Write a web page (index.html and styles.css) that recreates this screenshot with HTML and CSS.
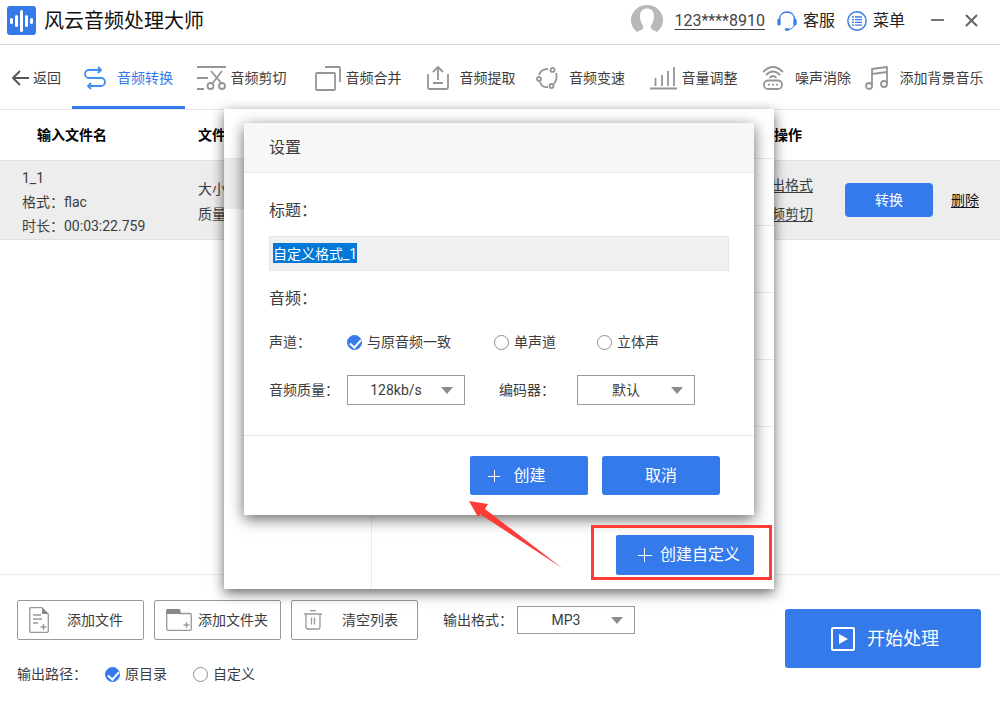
FILE: index.html
```html
<!DOCTYPE html>
<html lang="zh-CN">
<head>
<meta charset="utf-8">
<meta name="viewport" content="width=device-width, initial-scale=1">
<title>风云音频处理大师</title>
<link rel="stylesheet" href="styles.css">
</head>
<body>
<div class="app">
  <header class="titlebar">
    <svg class="logo" width="29" height="29" viewBox="0 0 29 29"><rect width="29" height="29" rx="3" fill="#347aea"/><g stroke="#fff" stroke-width="3" stroke-linecap="round"><path d="M4.500 13.500v3M9.500 10.500v9M14.500 5.500v19M19.500 10.500v9M24.500 13.500v3"/></g></svg>
    <h1 class="app-name">风云音频处理大师</h1>
    <div class="account">
      <svg width="32" height="32" viewBox="0 0 32 32"><path fill="#b9b9b9" d="M4 25A16 15 0 1 1 28 25L26 27L20 24V20.500C22 18 23 15 23 11C23 6 20 3.500 16 3.500S9 6 9 11C9 15 10 18 12 20.500V24L6 27Z"/></svg>
      <a class="phone" href="#">123****8910</a>
    </div>
    <button class="title-action" type="button">
      <svg width="20" height="20" viewBox="0 0 20 20" fill="none" stroke="#347aea"><path d="M2.500 9C2.500 4 5.500 1 10 1S17.500 4 17.500 9" stroke-width="1.300"/><path d="M2 9v4M18 9v4" stroke-width="3.200" stroke-linecap="round"/><path d="M17.500 13C17 16 15 18 11.500 18.500" stroke-width="1"/><path d="M9 18.500h2" stroke-width="2.500" stroke-linecap="round"/></svg>
      <span>客服</span>
    </button>
    <button class="title-action menu" type="button">
      <svg width="20" height="20" viewBox="0 0 20 20" fill="none" stroke="#347aea"><circle cx="10" cy="10" r="9.200" stroke-width="1.400"/><path d="M5 6h2M5 8.700h2M5 11.400h2M5 14.100h2M8 6h7M8 8.700h7M8 11.400h7M8 14.100h7" stroke-width="1.300"/></svg>
      <span>菜单</span>
    </button>
    <button class="window-button" type="button" aria-label="最小化"><svg width="13" height="13" viewBox="0 0 13 13"><path d="M0 6h13" stroke="#777" stroke-width="2"/></svg></button>
    <button class="window-button" type="button" aria-label="关闭"><svg width="13" height="13" viewBox="0 0 13 13"><path d="M1 1l11 11M12 1L1 12" stroke="#666" stroke-width="2"/></svg></button>
  </header>

  <nav class="toolbar">
    <button class="back" type="button">
      <svg class="line" width="17" height="16" viewBox="0 0 17 16"><path d="M17 8H1M8 1L1 8l7 7" stroke="#555"/></svg>
      <span>返回</span>
    </button>
    <button class="tab wide active" type="button">
      <svg class="line" width="22" height="24" viewBox="0 0 22 24"><path d="M14 1l3 3-3 3M17 4H5A4 4 0 0 0 5 12H17A4 4 0 0 1 17 20H4M7 17L4 20l3 3" stroke="#3f8ff0"/></svg>
      <span>音频转换</span>
    </button>
    <button class="tab" type="button">
      <svg class="line" width="29" height="24" viewBox="0 0 29 24"><path d="M0 1h29M0 12h11M0 23h7M14 5l11 13M25 5L15 18"/><circle cx="13.500" cy="20" r="3"/><circle cx="25" cy="20" r="3"/></svg>
      <span>音频剪切</span>
    </button>
    <button class="tab inset" type="button">
      <svg class="line" width="26" height="25" viewBox="0 0 26 25"><rect x="1" y="7" width="19" height="17" rx="1"/><path d="M10 1h14q1 0 1 1v14"/></svg>
      <span>音频合并</span>
    </button>
    <button class="tab wide inset" type="button">
      <svg class="line" width="22" height="24" viewBox="0 0 22 24"><path d="M1 8v13q0 2 2 2h16q2 0 2-2V8M11 14V1M6 6l5-5 5 5M6 17h10"/></svg>
      <span>音频提取</span>
    </button>
    <button class="tab wide" type="button">
      <svg class="line" width="22" height="22" viewBox="0 0 22 22"><path d="M3 8Q5 2 12 2M20 6Q22 11 18 17M12 20Q6 21 4 15"/><circle cx="16.500" cy="2.900" r="2"/><circle cx="3" cy="12" r="2"/><circle cx="15.500" cy="19" r="2"/></svg>
      <span>音频变速</span>
    </button>
    <button class="tab" type="button">
      <svg class="line" width="27" height="24" viewBox="0 0 27 24"><path d="M0 22.500h27M5.500 12v8M12 9v11M18 5v15M24 1v19"/></svg>
      <span>音量调整</span>
    </button>
    <button class="tab wide" type="button">
      <svg class="line" width="22" height="24" viewBox="0 0 22 24"><rect x="2" y="14.500" width="18" height="8.500" rx="4"/><path d="M1 6Q11-4 21 6M4 9Q11 2 18 9M7.500 12Q11 8 14.500 12M6 18.700h2M10 18.700h2M14 18.700h2"/></svg>
      <span>噪声消除</span>
    </button>
    <button class="tab wide" type="button">
      <svg class="line" width="24" height="24" viewBox="0 0 24 24"><path d="M7 20V3L22 1v17M7 8l15-2"/><circle cx="4" cy="20" r="3"/><circle cx="19" cy="18" r="3"/></svg>
      <span>添加背景音乐</span>
    </button>
  </nav>

  <main class="files">
    <table class="file-table">
      <colgroup><col class="col-name"><col><col class="col-links"><col class="col-actions"></colgroup>
      <thead>
        <tr><th class="name">输入文件名</th><th>文件信息</th><th class="ops" colspan="2">操作</th></tr>
      </thead>
      <tbody>
        <tr>
          <td class="name"><div>1_1</div><div>格式：flac</div><div>时长：00:03:22.759</div></td>
          <td class="info"><div>大小：</div><div>质量：</div></td>
          <td class="links"><a href="#">输出格式</a><a href="#">音频剪切</a></td>
          <td><div class="row-actions"><button class="primary convert" type="button">转换</button><a class="delete" href="#">删除</a></div></td>
        </tr>
      </tbody>
    </table>
  </main>

  <footer class="footer">
    <div class="options">
      <div class="option-row">
        <button class="file-button add-file" type="button">
          <svg class="thin" width="20" height="26" viewBox="0 0 20 26"><path d="M13 .7H2Q.7.700.7 2v22q0 1.300 1.300 1.300h16q1.300 0 1.300-1.300V7M4 8h8M4 12h9M4 16h5M14.500 17v6M11.500 20h6"/><path d="M13 0l7 7h-7z" fill="#888" stroke="none"/></svg>
          <span>添加文件</span>
        </button>
        <button class="file-button add-folder" type="button">
          <svg class="thin" width="26" height="22" viewBox="0 0 26 22"><path d="M.7 4v16q0 1.300 1.300 1.300h22q1.300 0 1.300-1.300V6Q25.300 4.500 24 4.500H13M20.500 13v6M17.500 16h6"/><path d="M0 5V1.500Q0 0 1.500 0H13q1.500 0 1.500 1.500V5z" fill="#888" stroke="none"/></svg>
          <span>添加文件夹</span>
        </button>
        <button class="file-button clear" type="button">
          <svg class="thin" width="18" height="20" viewBox="0 0 18 20"><path d="M0 4h18M6 .7h6M2 4v13q0 2 2 2h10q2 0 2-2V4M7.500 7.500v7M10.500 7.500v7"/></svg>
          <span>清空列表</span>
        </button>
        <label class="format-label" for="format">输出格式：</label>
        <span class="select short"><select id="format"><option>MP3</option></select></span>
      </div>
      <div class="option-row path-row" role="radiogroup" aria-label="输出路径">
        <span class="path-label">输出路径：</span>
        <label class="radio"><input type="radio" name="path" checked>原目录</label>
        <label class="radio"><input type="radio" name="path">自定义</label>
      </div>
    </div>
    <button class="primary start" type="button">
      <svg width="24" height="24" viewBox="0 0 24 24"><rect x="1" y="1" width="22" height="22" rx="1" fill="none" stroke="#fff" stroke-width="2"/><path d="M8 7l9 5-9 5z" fill="#fff"/></svg>
      <span>开始处理</span>
    </button>
  </footer>

  <div class="overlay">
    <section class="panel">
      <div class="panel-head"></div>
      <div class="panel-body">
        <div class="panel-side"><div class="side-selected"></div></div>
        <div class="panel-main">
          <div class="format-row"></div><div class="format-row"></div><div class="format-row"></div><div class="format-row"></div>
          <div class="panel-foot"><button class="primary create-custom" type="button">
            <svg width="14" height="14" viewBox="0 0 14 14"><path d="M0 7.500h14M6.500 0v14" stroke="#fff"/></svg><span>创建自定义</span></button></div>
        </div>
      </div>

      <form class="dialog" role="dialog" aria-labelledby="dialog-title">
        <h2 class="dialog-head" id="dialog-title">设置</h2>
        <div class="dialog-body">
          <label class="section-label" for="title">标题：</label>
          <input class="title-input" id="title" type="text" value="自定义格式_1">
          <div class="section-label">音频：</div>
          <div class="channels" role="radiogroup" aria-label="声道">
            <span>声道：</span>
            <label class="radio"><input type="radio" name="channel" checked>与原音频一致</label>
            <label class="radio"><input type="radio" name="channel">单声道</label>
            <label class="radio"><input type="radio" name="channel">立体声</label>
          </div>
          <div class="quality">
            <label for="bitrate">音频质量：</label>
            <span class="select"><select id="bitrate"><option>128kb/s</option></select></span>
            <label for="encoder">编码器：</label>
            <span class="select"><select id="encoder"><option>默认</option></select></span>
          </div>
        </div>
        <div class="dialog-foot">
          <button class="primary create" type="button"><svg width="12" height="12" viewBox="0 0 12 12"><path d="M0 6.500h12M6.500 0v12" stroke="#fff"/></svg><span>创建</span></button>
          <button class="primary" type="button">取消</button>
        </div>
      </form>
      <div class="highlight"></div>
      <svg class="arrow" width="94" height="68" viewBox="0 0 94 68"><path d="M0 0L19 3L16 8L93 67L11.500 13.500L9 16Z" fill="#fd3c38"/></svg>
    </section>
  </div>
</div>
<script src="app.js"></script>
</body>
</html>
```

FILE: styles.css
```css
* { box-sizing: border-box; }

body {
  margin: 0;
  background: #fff;
  color: #3c3c3c;
  font: 14px/20px Roboto, "Noto Sans CJK SC", sans-serif;
}

button, input, select { font: inherit; color: inherit; }
button { padding: 0; border: 0; background: none; white-space: nowrap; }
a { color: inherit; }
svg { display: block; flex: none; }
h1, h2 { margin: 0; font-weight: 400; }
.line { fill: none; stroke: #959595; stroke-width: 1.800; stroke-linejoin: round; }
.thin { fill: none; stroke: #999; stroke-width: 1.300; }

.app {
  position: relative;
  display: flex;
  flex-direction: column;
  min-height: 100vh;
}

/* title bar */
.titlebar {
  display: flex;
  align-items: center;
  height: 45px;
  padding: 0 22px 3px 7px;
  border-bottom: 1px solid #d9d9d9;
  font-size: 16px;
  color: #222;
}
.app-name { margin-left: 8px; font-size: 20px; line-height: 28px; color: #111; }
.account { display: flex; align-items: center; gap: 11px; margin: 0 12px 0 auto; }
.phone { color: #444; text-underline-offset: 3px; }
.title-action { display: flex; align-items: center; gap: 6px; }
.menu { margin-left: 12px; }
.window-button { margin-left: 26px; }
.window-button + .window-button { margin-left: 21px; }

/* toolbar */
.toolbar {
  display: grid;
  grid-template-columns: 72px repeat(7, 113fr) 122fr;
  height: 65px;
  padding-right: 15px;
  border-bottom: 1px solid #e4e4e4;
}
.back { display: flex; align-items: center; gap: 4px; padding: 2px 0 0 12px; }
.tab {
  display: flex;
  align-items: center;
  justify-content: center;
  gap: 5px;
  padding-top: 2px;
  border-top: 3px solid transparent;
  border-bottom: 3px solid transparent;
}
.tab.wide { gap: 11px; }
.tab.inset { padding-left: 7px; }
.tab.active { border-bottom-color: #347aea; color: #347aea; }

/* file list */
.files { flex: 1; }
.file-table { width: 100%; table-layout: fixed; border-collapse: collapse; }
.col-name { width: 198px; }
.col-links { width: 88px; }
.col-actions { width: 155px; }
.file-table th { height: 50px; padding: 0; text-align: left; font-weight: 700; color: #000; }
.file-table th.name { padding-left: 37px; }
.file-table th.ops { padding-left: 17px; }
.file-table td { height: 79px; padding: 0; background: #ededed; border: solid #e0e0e0; border-width: 1px 0; }
.file-table td.name { padding: 4px 0 0 22px; line-height: 24px; }
.file-table td.info { padding-top: 4px; line-height: 25px; }
.links a { display: block; line-height: 29px; text-underline-offset: 2px; }
.row-actions { display: flex; align-items: center; gap: 18px; }
.delete { color: #111; text-underline-offset: 2px; }

.primary {
  display: flex;
  align-items: center;
  justify-content: center;
  border-radius: 3px;
  background: #347aea;
  color: #fff;
}
.convert { width: 88px; height: 34px; border-radius: 4px; }

/* bottom bar */
.footer {
  display: flex;
  justify-content: space-between;
  align-items: flex-start;
  min-height: 127px;
  padding: 25px 19px 15px 17px;
  border-top: 1px solid #ececec;
}
.option-row { display: flex; align-items: center; gap: 10px; }
.file-button {
  display: flex;
  align-items: center;
  width: 127px;
  height: 40px;
  padding-left: 11px;
  border: 1px solid #999;
  border-radius: 2px;
}
.add-file { gap: 18px; }
.add-folder { gap: 6px; }
.clear { gap: 20px; padding-left: 12px; }
.format-label { margin-left: 15px; margin-right: -6px; }
.path-row { gap: 26px; margin-top: 24px; }
.path-label { width: 62px; white-space: nowrap; }
.start { gap: 12px; width: 196px; height: 59px; margin-top: 9px; padding-left: 4px; font-size: 18px; }

/* form controls */
.radio { display: flex; align-items: center; gap: 5px; white-space: nowrap; }
.radio input {
  position: relative;
  appearance: none;
  width: 15px;
  height: 15px;
  margin: 0;
  border: 1px solid #8f8f8f;
  border-radius: 50%;
}
.radio input:checked { border-color: #347aea; background: #347aea; }
.radio input:checked::after {
  content: "";
  position: absolute;
  left: 2px;
  top: 3px;
  width: 9px;
  height: 5px;
  border: solid #fff;
  border-width: 0 0 2px 2px;
  transform: rotate(-48deg);
}
.select { position: relative; display: block; width: 118px; height: 30px; }
.select.short { height: 28px; }
.select select {
  appearance: none;
  width: 100%;
  height: 100%;
  padding: 0 20px 0 0;
  border: 1px solid #999;
  border-radius: 0;
  background: #fff;
  text-align-last: center;
}
.select::after {
  content: "";
  position: absolute;
  right: 12px;
  top: 50%;
  margin-top: -3px;
  border: solid transparent;
  border-width: 7px 6px 0;
  border-top-color: #8c8c8c;
}

/* format panel behind the dialog */
.overlay {
  position: absolute;
  inset: 0;
  display: grid;
  place-items: center;
  padding: 0 2px 3px 0;
}
.panel {
  position: relative;
  display: flex;
  flex-direction: column;
  width: 550px;
  min-height: 480px;
  background: #fff;
  box-shadow: 0 4px 12px rgba(0, 0, 0, 0.600);
}
.panel-head { height: 50px; border-bottom: 1px solid #e8e8e8; }
.panel-body { display: flex; flex: 1; }
.panel-side { width: 148px; border-right: 1px solid #ececec; }
.side-selected { height: 50px; background: #ededed; }
.panel-main { display: flex; flex: 1; flex-direction: column; }
.format-row { height: 67px; border-bottom: 1px solid #e8e8e8; }
.panel-foot { display: flex; justify-content: flex-end; margin-top: auto; padding: 0 20px 14px 0; }
.create-custom { gap: 8px; width: 138px; height: 40px; padding-left: 8px; font-size: 16px; border-radius: 2px; }

/* settings dialog */
.dialog {
  position: absolute;
  top: 14px;
  left: 20px;
  right: 20px;
  background: #fff;
  box-shadow: 0 4px 14px rgba(0, 0, 0, 0.600);
}
.dialog-head {
  height: 50px;
  padding: 0 25px;
  border-bottom: 1px solid #e9e9e9;
  background: #f7f7f7;
  font-size: 16px;
  line-height: 50px;
}
.dialog-body { padding: 26px 25px 30px; border-bottom: 1px solid #e6e6e6; }
.section-label { display: block; font-size: 16px; line-height: 24px; }
.title-input {
  display: block;
  width: 100%;
  height: 35px;
  margin: 13px 0 16px;
  padding: 0 3px 2px;
  border: 1px solid #e6e6e6;
  outline: 0;
  background: #f0f0f0;
}
.title-input::selection { background: #0078d7; color: #fff; }
.channels {
  display: grid;
  grid-template-columns: 78px 147px 103px auto;
  align-items: center;
  margin: 20px 0 22px;
  line-height: 22px;
}
.quality {
  display: grid;
  grid-template-columns: 78px 152px 78px auto;
  align-items: center;
}
.dialog-foot { display: flex; justify-content: flex-end; gap: 14px; padding: 20px 34px 20px 0; }
.dialog-foot .primary { width: 118px; height: 39px; font-size: 16px; }
.dialog-foot .create { gap: 13px; padding-right: 24px; border-radius: 2px; }

/* step markers */
.highlight {
  position: absolute;
  right: 2px;
  bottom: 9px;
  width: 181px;
  height: 55px;
  border: 3px solid #fd3c38;
}
.arrow { position: absolute; left: 245px; top: 392px; }
```

FILE: app.js
```javascript
const title = document.getElementById("title");
title.focus();
title.select();
```
